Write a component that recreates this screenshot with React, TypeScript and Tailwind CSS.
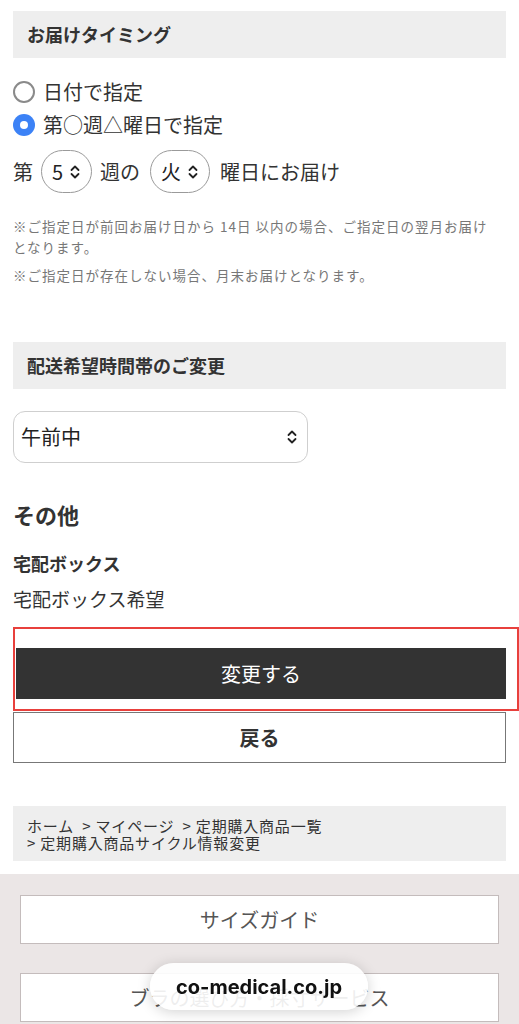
import React from 'react'

const font = { fontFamily: '"Noto Sans CJK JP", "Noto Sans", sans-serif' }

function Chevrons({ className = '' }: { className?: string }) {
  return (
    <svg viewBox="0 0 12 16" className={className} fill="none" stroke="currentColor" strokeWidth="1.8" strokeLinecap="round" strokeLinejoin="round">
      <path d="M2.5 6 6 2.5 9.5 6" />
      <path d="M2.5 10 6 13.5 9.5 10" />
    </svg>
  )
}

function SectionHead({ children }: { children: React.ReactNode }) {
  return (
    <div className="h-[47px] bg-[#eeeeee] flex items-center pl-[14px] text-[18px] font-bold text-[#333]">
      {children}
    </div>
  )
}

function Radio({ checked, label }: { checked?: boolean; label: string }) {
  return (
    <div className="flex items-center h-[33px] gap-[8px]">
      {checked ? (
        <span className="w-[22px] h-[22px] rounded-full bg-[#3c82f6] flex items-center justify-center">
          <span className="w-[8px] h-[8px] rounded-full bg-white" />
        </span>
      ) : (
        <span className="w-[22px] h-[22px] rounded-full border-[2px] border-[#8a8a8a] bg-white" />
      )}
      <span className="text-[20px] text-[#333]">{label}</span>
    </div>
  )
}

function Pill({ value }: { value: string }) {
  return (
    <span className="inline-flex items-center h-[43px] px-[10px] gap-[6px] rounded-full border border-[#9a9a9a] text-[20px] text-[#222]">
      {value}
      <Chevrons className="w-[12px] h-[16px] text-[#222]" />
    </span>
  )
}

export default function App() {
  return (
    <div style={font} className="w-[519px] bg-white text-[#333] overflow-hidden">
      <div className="px-[13px] pt-[11px]">
        <SectionHead>お届けタイミング</SectionHead>

        <div className="mt-[17px]">
          <Radio label="日付で指定" />
          <Radio checked label="第○週△曜日で指定" />
        </div>

        <div className="flex items-center mt-[9px] text-[20px] text-[#333]">
          <span>第</span>
          <span className="ml-[8px]"><Pill value="5" /></span>
          <span className="ml-[8px]">週の</span>
          <span className="ml-[10px]"><Pill value="火" /></span>
          <span className="ml-[10px]">曜日にお届け</span>
        </div>

        <div className="mt-[23px] text-[13.5px] leading-[21px] text-[#777] tracking-[1px]">
          <p>
            ※ご指定日が前回お届け日から 14日 以内の場合、ご指定日の翌月お届け
            <br />
            となります。
          </p>
          <p className="mt-[7px]">※ご指定日が存在しない場合、月末お届けとなります。</p>
        </div>

        <div className="mt-[56px]">
          <SectionHead>配送希望時間帯のご変更</SectionHead>
        </div>

        <div className="mt-[22px] w-[295px] h-[52px] rounded-[12px] border border-[#cfcfcf] flex items-center justify-between pl-[7px] pr-[9px]">
          <span className="text-[20px] text-[#222]">午前中</span>
          <Chevrons className="w-[12px] h-[16px] text-[#222]" />
        </div>

        <div className="mt-[36px] text-[22px] font-bold leading-[30px]">その他</div>
        <div className="mt-[21px] text-[18px] font-bold leading-[26px]">宅配ボックス</div>
        <div className="mt-[10px] text-[19px] leading-[26px]">宅配ボックス希望</div>

        <div className="relative mt-[36px]">
          <button className="h-[51px] bg-[#333333] text-white text-[20px] ml-[3px] w-[490px]">
            変更する
          </button>
          <span className="absolute left-0 top-[-21px] w-[506px] h-[84px] border-[2px] border-[#e8403c] pointer-events-none" />
        </div>

        <button className="mt-[13px] w-full h-[51px] border border-[#777] bg-white text-[20px] font-bold text-[#333]">
          戻る
        </button>

        <div className="mt-[43px] h-[55px] bg-[#eeeeee] flex flex-col justify-center pl-[14px] text-[15px] leading-[17px] tracking-[0.8px] text-[#333] whitespace-pre">
          <span>{'ホーム  > マイページ  > 定期購入商品一覧'}</span>
          <span>{'> 定期購入商品サイクル情報変更'}</span>
        </div>
      </div>

      <div className="mt-[13px] bg-[#ebe6e6] px-[20px] pt-[21px] pb-[20px] flex flex-col gap-[29px] rounded-b-[8px]">
        <div className="h-[49px] bg-white border border-[#c4bcbc] flex items-center justify-center text-[20px] text-[#555]">
          サイズガイド
        </div>
        <div className="h-[49px] bg-white border border-[#c4bcbc] flex items-center justify-center text-[20px] text-[#555]">
          ブラの選び方・採寸サービス
        </div>
      </div>

      <div className="fixed left-[150px] top-[963px] w-[218px] h-[47px] rounded-full bg-white/90 shadow-[0_2px_14px_rgba(0,0,0,0.18)] flex items-center justify-center">
        <span className="text-[20px] font-bold text-[#111]" style={{ fontFamily: 'Inter, "Noto Sans", sans-serif' }}>
          co-medical.co.jp
        </span>
      </div>
    </div>
  )
}
